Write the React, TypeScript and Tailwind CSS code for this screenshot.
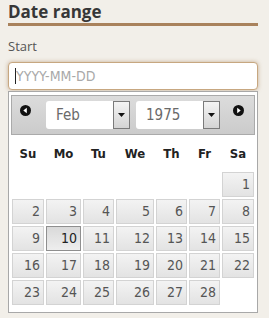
const days: (number | null)[] = [
  null, null, null, null, null, null, 1,
  2, 3, 4, 5, 6, 7, 8,
  9, 10, 11, 12, 13, 14, 15,
  16, 17, 18, 19, 20, 21, 22,
  23, 24, 25, 26, 27, 28, null,
];

const heads = ["Su", "Mo", "Tu", "We", "Th", "Fr", "Sa"];

function NavIcon({ dir }: { dir: "prev" | "next" }) {
  return (
    <svg width="11" height="11" viewBox="0 0 11 11" className="mt-[9px] shrink-0">
      <circle cx="5.5" cy="5.5" r="5.5" fill="#111" />
      {dir === "prev" ? (
        <path d="M3.3 5.5 L6.8 2.8 L6.8 8.2 Z" fill="#fff" />
      ) : (
        <path d="M7.7 5.5 L4.2 2.8 L4.2 8.2 Z" fill="#fff" />
      )}
    </svg>
  );
}

function Select({ value, className }: { value: string; className: string }) {
  return (
    <div className={`mt-[5px] flex h-[28px] w-[84px] shrink-0 ${className}`}>
      <div className="flex flex-1 items-center rounded-l-[3px] bg-white pl-[10px] text-[15px] text-[#6a6a6a]">
        {value}
      </div>
      <div className="flex w-[17px] items-center justify-center border border-[#7a7a7a] bg-gradient-to-b from-[#f4f4f4] to-[#d4d4d4]">
        <svg width="7" height="4" viewBox="0 0 7 4">
          <path d="M0 0 L7 0 L3.5 4 Z" fill="#111" />
        </svg>
      </div>
    </div>
  );
}

export default function App() {
  const cal = { fontFamily: '"DejaVu Sans Condensed", "Open Sans", sans-serif' };
  return (
    <div className="min-h-[318px] w-[269px] bg-[#f2efe9] pl-2" style={{ fontFamily: '"Open Sans", sans-serif' }}>
      <div className="w-[250px]">
        <h2 className="text-[17px] font-bold leading-[23px] text-[#373737]">Date range</h2>
        <div className="h-[3px] bg-[#a9825c]" />
        <div className="mt-[11px] text-[13px] leading-[18px] text-[#555]">Start</div>
        <div
          className="mt-[7px] flex h-[28px] items-center rounded-[4px] border border-[#c7a780] bg-white pl-[6px] shadow-[0_0_4px_rgba(169,130,92,0.6)]"
          style={cal}
        >
          <span className="h-[16px] w-px bg-[#222]" />
          <span className="text-[14px] text-[#a9a9a9]">YYYY-MM-DD</span>
        </div>

        <div className="mt-[1px] h-[222px] border border-[#a8a8a8] bg-white px-[2px] pt-[3px]" style={cal}>
          <div className="flex h-[40px] items-start border border-[#aaa] bg-gradient-to-b from-[#dcdcdc] to-[#cbcbcb] pl-[8px]">
            <NavIcon dir="prev" />
            <Select value="Feb" className="ml-[15px]" />
            <Select value="1975" className="ml-[6px]" />
            <div className="ml-[13px]">
              <NavIcon dir="next" />
            </div>
          </div>

          <div className="ml-[1px] grid grid-cols-[32px_35px_31px_38px_31px_31px_32px] gap-x-[2px]">
            {heads.map((h) => (
              <div key={h} className="flex h-[37px] items-center justify-center text-[13px] font-bold text-[#222]">
                {h}
              </div>
            ))}
          </div>
          <div className="ml-[1px] grid grid-cols-[32px_35px_31px_38px_31px_31px_32px] gap-x-[2px] gap-y-[2px]">
            {days.map((d, i) =>
              d === null ? (
                <div key={i} className="h-[25px]" />
              ) : d === 10 ? (
                <div
                  key={i}
                  className="flex h-[25px] items-center justify-end border border-[#8f8f8f] bg-gradient-to-b from-[#d9d9d9] to-[#eeeeee] pr-[3px] text-[14px] text-[#222]"
                >
                  {d}
                </div>
              ) : (
                <div
                  key={i}
                  className="flex h-[25px] items-center justify-end border border-[#d3d3d3] bg-gradient-to-b from-[#f3f3f3] to-[#e3e3e3] pr-[3px] text-[14px] text-[#555]"
                >
                  {d}
                </div>
              )
            )}
          </div>
        </div>
      </div>
    </div>
  );
}
